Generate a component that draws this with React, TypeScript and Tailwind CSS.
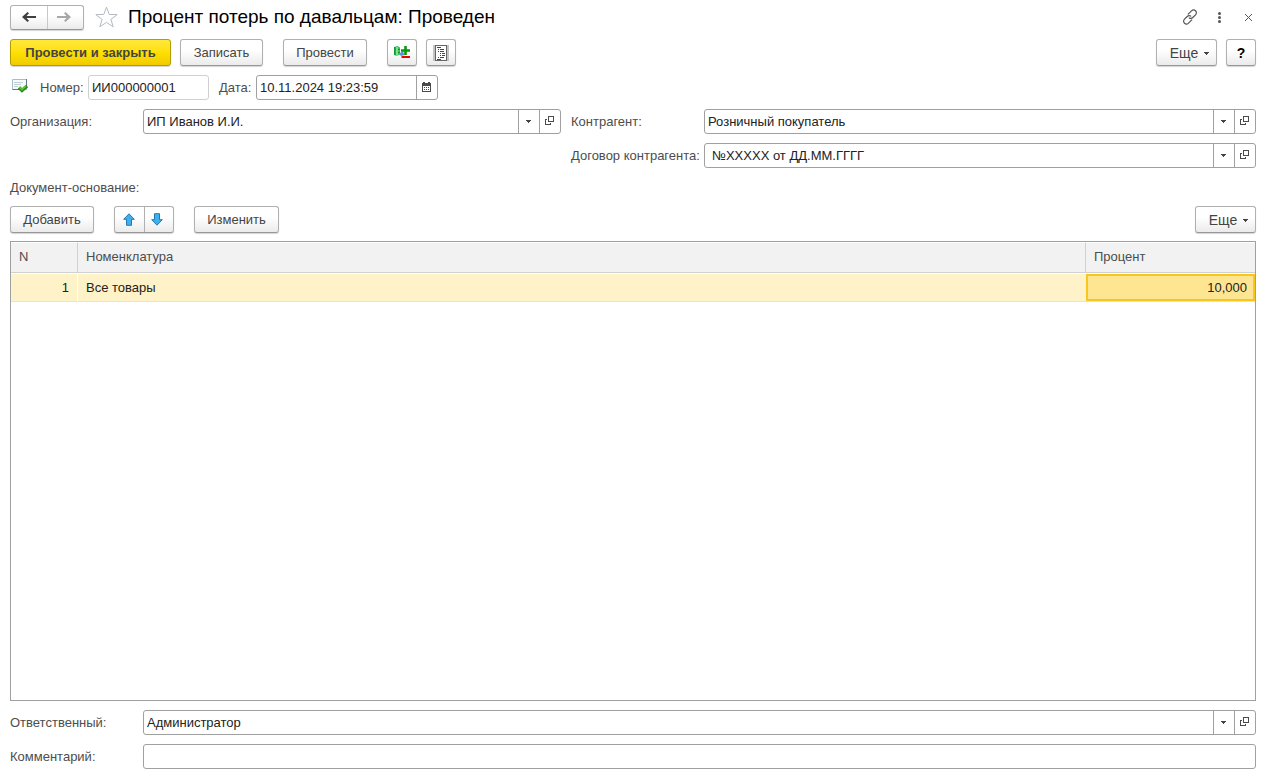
import React from "react";

const buttonBase =
  "flex h-[27px] items-center justify-center rounded-[3px] border border-[#b0b0b0] border-b-[#979797] bg-linear-to-b from-white from-40% to-[#ebebeb] text-[#444] shadow-[0_1px_1px_#d4d4d4]";

function Caret() {
  return (
    <svg width="5" height="3" viewBox="0 0 5 3" fill="#444" aria-hidden="true" shapeRendering="crispEdges">
      <path d="M0 0h5v1H0zM1 1h3v1H1zM2 2h1v1H2z" />
    </svg>
  );
}

function OpenIcon() {
  return (
    <svg width="10" height="10" viewBox="0 0 10 10" fill="#4a4a4a" aria-hidden="true" className="mb-px">
      <path fillRule="evenodd" d="M3 0h6v6H3zM4 1v4h4V1z" />
      <path d="M0 3h2v1H1v4h4V7h1v2H0z" />
    </svg>
  );
}

type FieldProps = {
  id: string;
  label: string;
  value: string;
  picker?: boolean;
  indent?: boolean;
};

function Field({ id, label, value, picker = true, indent = false }: FieldProps) {
  return (
    <div className="flex items-center">
      <label htmlFor={id} className="w-[133px] shrink-0 whitespace-nowrap text-[#4d4d4d]">
        {label}
      </label>
      <div className="flex h-[25px] min-w-0 flex-1 rounded-[3px] border border-[#a0a0a0] bg-white">
        <input
          id={id}
          defaultValue={value}
          className={`h-full min-w-0 flex-1 bg-transparent pr-1 text-[#222] outline-none ${indent ? "pl-[7px]" : "pl-[3px]"}`}
        />
        {picker && (
          <>
            <button type="button" aria-label={`${label} выбрать`} className="flex w-[21px] items-center justify-center border-l border-[#a0a0a0] pr-px">
              <Caret />
            </button>
            <button type="button" aria-label={`${label} открыть`} className="flex w-[21px] items-center justify-center border-l border-[#a0a0a0]">
              <OpenIcon />
            </button>
          </>
        )}
      </div>
    </div>
  );
}

function MoreButton() {
  return (
    <button type="button" className={`${buttonBase} w-[61px] gap-[6px] pl-[6px] text-sm`}>
      Еще
      <span className="pt-[2px]">
        <Caret />
      </span>
    </button>
  );
}

function BlueArrow({ down = false }: { down?: boolean }) {
  return (
    <svg width="12" height="13" viewBox="0 0 12 13" aria-hidden="true" className={down ? "mr-[3px] rotate-180" : "mr-px"}>
      <path d="M6 .8 11.3 6.3H8.5v6h-5v-6H.7z" fill="#3fb0ee" stroke="#2378ad" strokeLinejoin="round" />
    </svg>
  );
}

function NavArrow({ forward = false }: { forward?: boolean }) {
  return (
    <svg width="14" height="10" viewBox="0 0 14 10" aria-hidden="true" fill={forward ? "#a8a8a8" : "#404040"} className={forward ? "mr-[2px] rotate-180" : ""}>
      <path d="M0 5 5.500 0 7 1.200 4.500 4H14v2H4.500L7 8.800 5.500 10z" />
    </svg>
  );
}

function PostedIcon() {
  return (
    <svg width="17" height="15" viewBox="0 0 17 15" fill="none" aria-hidden="true" className="mb-1">
      <path d="M.5 1.500h14v10H.5z" fill="#f8fbfd" stroke="#a9bccb" />
      <path d="M14.500 1v7M.5 11.500h7" stroke="#60788a" />
      <path d="M2 4.500h9M2 6.500h7M2 8.500h4" stroke="#c0ced8" />
      <path d="m7 9.500 3 3L15 8" stroke="#258b18" strokeWidth="3.400" />
      <path d="m7.500 9.300 2.500 2.400 4-3.900" stroke="#66cc39" strokeWidth="1.500" />
    </svg>
  );
}

function MovementsIcon() {
  return (
    <svg width="16" height="16" viewBox="0 0 16 16" aria-hidden="true" className="mb-px">
      <path d="M0 3.500Q3 .5 6 3.500v7Q3 12.500 0 11z" fill="#35c256" />
      <path d="M.8 3v8" stroke="#129434" strokeWidth="1.400" />
      <path d="M3 3v8" stroke="#b5efb9" strokeWidth="1.200" />
      <path d="M4 5.500h2M4 8.500h2" stroke="#129434" />
      <path d="m5 10 3.500-3L11 11l-4 1z" fill="#5b96d9" />
      <path d="M11.500 2v9M7 6.500h9" stroke="#07980f" strokeWidth="2.600" />
      <path d="M7.500 13h8.500" stroke="#f00000" strokeWidth="2" />
    </svg>
  );
}

function ReportIcon() {
  return (
    <svg width="16" height="16" viewBox="0 0 16 16" aria-hidden="true">
      <path d="M0 0h16v16H0z" fill="#c4c4c4" />
      <path d="M2 0h12v16H2z" fill="#666" />
      <path d="M3 1h10v14H3z" fill="#fff" />
      <path d="M4 2h4v1H4zM5 4h1v1H5zM7 4h4v1H7zM5 6h1v1H5zM7 6h4v1H7zM7 8h1v1H7zM9 8h3v1H9zM7 10h1v1H7zM9 10h3v1H9zM5 12h1v1H5zM7 12h4v1H7zM4 14h4v1H4z" fill="#0c5482" />
    </svg>
  );
}

function CalendarIcon() {
  return (
    <svg width="9" height="10" viewBox="0 0 9 10" aria-hidden="true" className="mr-px mb-[2px]">
      <path fill="#4a4a4a" fillRule="evenodd" d="M1 0h2v1h3V0h2v1h1v9H0V1h1zM1 4v5h7V4z" />
      <path fill="#4a4a4a" d="M2 5h1v1H2zM4 5h1v1H4zM6 5h1v1H6zM2 7h1v1H2zM4 7h1v1H4zM6 7h1v1H6z" />
    </svg>
  );
}

export default function App() {
  return (
    <main className="flex min-h-screen flex-col bg-white px-[10px] pt-[5px] pb-1 font-['Liberation_Sans',Arial,sans-serif] text-[13px] leading-4 text-[#444]">
      <header className="flex h-6 items-center">
        <div className="flex h-[25px] w-[74px] shrink-0 rounded-[3px] border border-[#b0b0b0] border-b-[#979797] bg-linear-to-b from-white from-40% to-[#ebebeb] shadow-[0_1px_1px_#d4d4d4]">
          <button type="button" aria-label="Назад" className="flex flex-1 items-center justify-center">
            <NavArrow />
          </button>
          <button type="button" aria-label="Вперед" className="flex flex-1 items-center justify-center border-l border-[#c8c8c8]">
            <NavArrow forward />
          </button>
        </div>
        <button type="button" aria-label="В избранное" className="ml-[11px] shrink-0">
          <svg width="23" height="22" viewBox="0 0 23 22" fill="none" stroke="#b3bac2" aria-hidden="true">
            <path d="m11.5 1.200 2.700 7.200 8 .2-6.300 4.800 2.300 7.400-6.700-4.400-6.700 4.400 2.300-7.400L.8 8.600l8-.2z" />
          </svg>
        </button>
        <h1 className="ml-[10px] text-[19px] leading-6 text-black">Процент потерь по давальцам: Проведен</h1>
        <div className="ml-auto flex items-center">
          <button type="button" aria-label="Получить ссылку">
            <svg width="16" height="16" viewBox="0 0 16 16" fill="none" stroke="#555" strokeWidth="1.200" strokeLinecap="round" aria-hidden="true">
              <path d="M6.200 5.200 9.500 1.900c1.200-1.200 2.800-1.300 4-.2s1.200 2.900 0 4.100L10.800 8.500c-1 1-2.500 1.100-3.500.4" />
              <path d="M9.800 10.800 6.500 14.100c-1.200 1.200-2.800 1.300-4 .2s-1.200-2.900 0-4.100L5.200 7.500c1-1 2.500-1.100 3.500-.4" />
            </svg>
          </button>
          <button type="button" aria-label="Меню" className="ml-5">
            <svg width="3" height="11" viewBox="0 0 3 11" fill="#555" aria-hidden="true">
              <circle cx="1.500" cy="1.500" r="1.500" />
              <circle cx="1.500" cy="5.500" r="1.500" />
              <circle cx="1.500" cy="9.500" r="1.500" />
            </svg>
          </button>
          <button type="button" aria-label="Закрыть" className="mr-1 ml-6">
            <svg width="7" height="7" viewBox="0 0 7 7" stroke="#555" aria-hidden="true">
              <path d="m0 0 7 7M7 0 0 7" />
            </svg>
          </button>
        </div>
      </header>

      <div className="mt-[10px] flex">
        <button type="button" className="h-[27px] w-[161px] rounded-[3px] border border-[#b39b00] bg-linear-to-b from-[#ffe838] via-[#ffe000] to-[#f0cb00] font-bold text-[#444] shadow-[0_1px_1px_#d4d4d4]">
          Провести и закрыть
        </button>
        <button type="button" className={`${buttonBase} ml-[9px] w-[83px]`}>Записать</button>
        <button type="button" className={`${buttonBase} ml-5 w-[84px]`}>Провести</button>
        <button type="button" aria-label="Движения документа" className={`${buttonBase} ml-5 w-[30px]`}>
          <MovementsIcon />
        </button>
        <button type="button" aria-label="Отчет" className={`${buttonBase} ml-[9px] w-[30px]`}>
          <ReportIcon />
        </button>
        <div className="ml-auto flex gap-[9px]">
          <MoreButton />
          <button type="button" className={`${buttonBase} w-[30px] text-sm font-bold text-black`}>?</button>
        </div>
      </div>

      <div className="mt-[9px] flex items-center">
        <span className="ml-[2px] w-7 shrink-0">
          <PostedIcon />
        </span>
        <label htmlFor="number" className="w-12 text-[#4d4d4d]">Номер:</label>
        <input id="number" defaultValue="ИИ000000001" className="h-[25px] w-[121px] rounded-[3px] border border-[#d0d0d0] px-[3px] text-[#222] outline-none" />
        <label htmlFor="date" className="ml-[10px] w-[37px] text-[#4d4d4d]">Дата:</label>
        <div className="flex h-[25px] w-[182px] rounded-[3px] border border-[#a0a0a0]">
          <input id="date" defaultValue="10.11.2024 19:23:59" className="min-w-0 flex-1 pl-[3px] text-[#222] outline-none" />
          <button type="button" aria-label="Выбрать дату" className="flex w-[21px] items-center justify-center border-l border-[#a0a0a0]">
            <CalendarIcon />
          </button>
        </div>
      </div>

      <div className="mt-[9px] grid grid-cols-[551fr_685fr] items-start gap-x-[10px]">
        <Field id="org" label="Организация:" value="ИП Иванов И.И." />
        <div className="flex flex-col gap-[9px]">
          <Field id="partner" label="Контрагент:" value="Розничный покупатель" />
          <Field id="contract" label="Договор контрагента:" value="№XXXXX от ДД.ММ.ГГГГ" indent />
        </div>
      </div>

      <p className="mt-3 text-[#4d4d4d]">Документ-основание:</p>

      <div className="mt-[10px] flex">
        <button type="button" className={`${buttonBase} w-[84px]`}>Добавить</button>
        <div className={`${buttonBase} ml-5 w-[60px]`}>
          <button type="button" aria-label="Переместить вверх" className="flex h-full flex-1 items-center justify-center">
            <BlueArrow />
          </button>
          <button type="button" aria-label="Переместить вниз" className="flex h-full flex-1 items-center justify-center border-l border-[#b0b0b0]">
            <BlueArrow down />
          </button>
        </div>
        <button type="button" className={`${buttonBase} ml-5 w-[85px]`}>Изменить</button>
        <div className="ml-auto">
          <MoreButton />
        </div>
      </div>

      <div className="mt-2 flex-1 border border-[#a0a0a0]">
        <table className="w-full table-fixed border-separate border-spacing-0">
          <colgroup>
            <col className="w-[67px]" />
            <col />
            <col className="w-[169px]" />
          </colgroup>
          <thead>
            <tr className="h-[31px] bg-[#f2f2f2] text-left text-[#4d4d4d]">
              <th className="border-t border-r border-b border-t-white border-r-[#d0d0d0] border-b-[#d0d0d0] px-2 pb-[2px] font-normal">N</th>
              <th className="border-t border-r border-b border-t-white border-r-[#d0d0d0] border-b-[#d0d0d0] px-2 pb-[2px] font-normal">Номенклатура</th>
              <th className="border-t border-b border-t-white border-b-[#d0d0d0] px-2 pb-[2px] font-normal">Процент</th>
            </tr>
          </thead>
          <tbody>
            <tr className="h-[29px] bg-[#fdf2c8] text-[#222]">
              <td className="border-t border-r border-b border-t-white border-r-white border-b-[#e3e3e3] px-2 text-right">1</td>
              <td className="border-t border-b border-t-white border-b-[#e3e3e3] px-2">Все товары</td>
              <td className="border-t border-b border-t-white border-b-[#e3e3e3] p-0">
                <div className="flex h-[27px] items-center justify-end border-2 border-[#f7c71e] bg-[#fee591] pr-[6px]">10,000</div>
              </td>
            </tr>
          </tbody>
        </table>
      </div>

      <div className="mt-[9px] flex flex-col gap-[9px]">
        <Field id="responsible" label="Ответственный:" value="Администратор" />
        <Field id="comment" label="Комментарий:" value="" picker={false} />
      </div>
    </main>
  );
}
